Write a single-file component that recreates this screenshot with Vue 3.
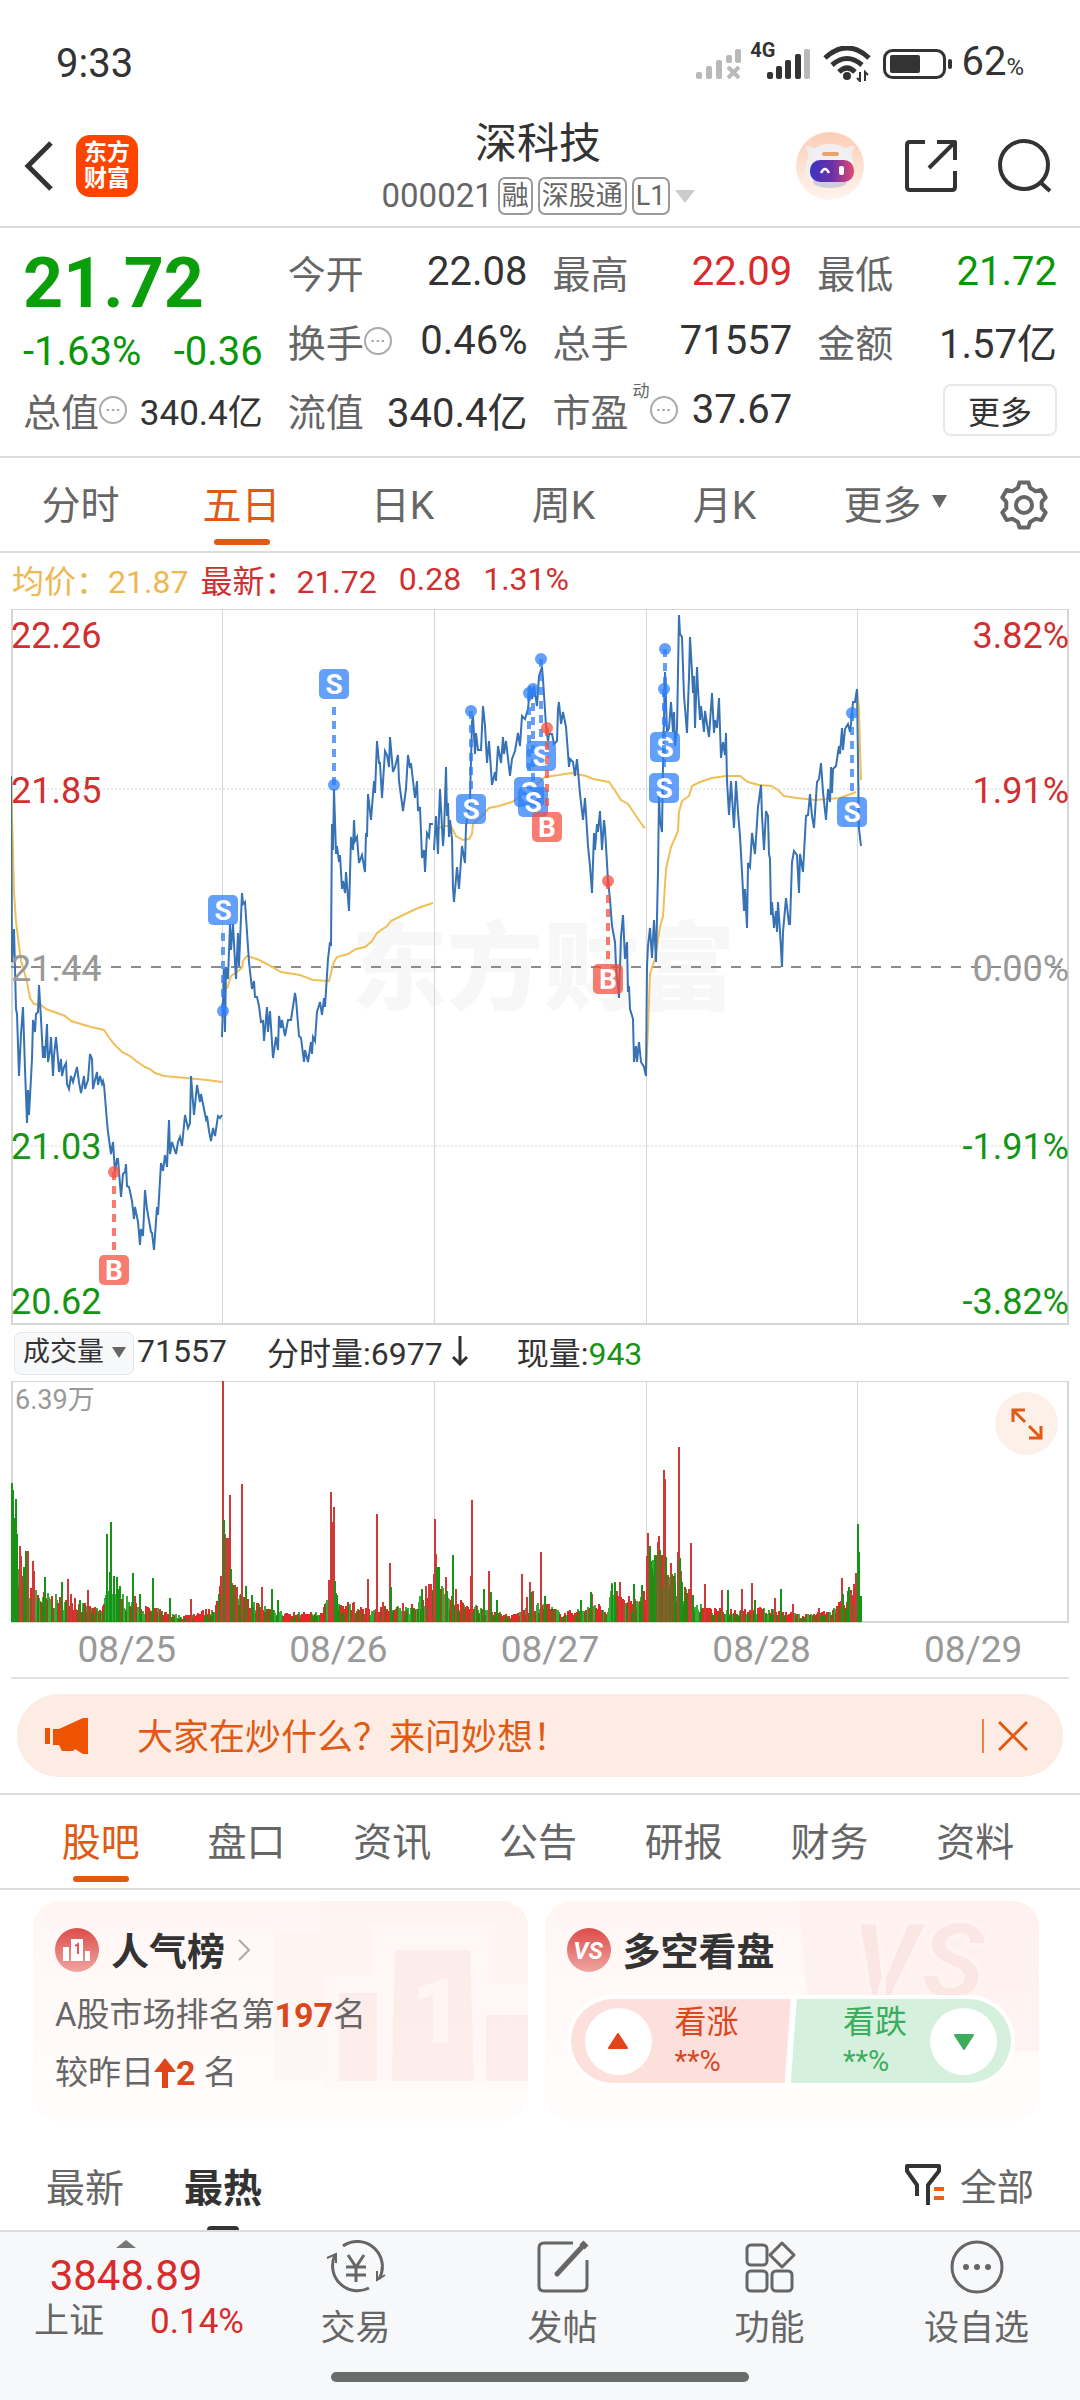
<template>
  <div class="page">
    <div class="status-bar">
      <span class="clock">9:33</span>
      <div class="status-icons">
        <svg width="46" height="30" viewBox="0 0 46 30" fill="#b9b9b9">
          <rect x="0" y="23" width="6" height="7" rx="2" />
          <rect x="10" y="17" width="6" height="13" rx="2" />
          <rect x="20" y="11" width="6" height="19" rx="2" />
          <rect x="30" y="6" width="6" height="8" rx="2" />
          <rect x="39" y="0" width="6" height="14" rx="2" />
          <path d="M32 18l11 11M43 18l-11 11" stroke="#b9b9b9" stroke-width="4" />
        </svg>
        <span class="net">4G</span>
        <svg class="signal" width="44" height="30" viewBox="0 0 44 30" fill="#333">
          <rect x="0" y="23" width="6" height="7" rx="2" />
          <rect x="9" y="17" width="6" height="13" rx="2" />
          <rect x="18" y="11" width="6" height="19" rx="2" />
          <rect x="28" y="5" width="6" height="25" rx="2" />
          <rect x="37" y="0" width="6" height="30" rx="2" fill="#b9b9b9" />
        </svg>
        <svg class="wifi" width="48" height="36" viewBox="0 0 48 36" fill="none" stroke="#333" stroke-width="5">
          <path d="M2 12Q24-8 46 12" />
          <path d="M9 19Q24 6 39 19" />
          <path d="M16 26Q24 18 32 26" />
          <circle cx="24" cy="30" r="4" fill="#333" stroke="none" />
          <path d="M37 26v9l-3-3M42 35v-9l3 3" stroke-width="2" />
        </svg>
        <svg class="battery" width="70" height="30" viewBox="0 0 70 30">
          <rect x="1.500" y="1.500" width="60" height="27" rx="8" fill="none" stroke="#333" stroke-width="3" />
          <rect x="7" y="6" width="30" height="18" rx="2" fill="#333" />
          <rect x="65" y="10" width="4" height="10" rx="2" fill="#333" />
        </svg>
        <span class="power">62<small>%</small></span>
      </div>
    </div>

    <header class="header">
      <div class="header-left">
        <button class="icon-btn" aria-label="返回">
          <svg width="30" height="50" viewBox="0 0 30 50" fill="none" stroke="#333" stroke-width="5">
            <path d="M27 2L4 25l23 23" />
          </svg>
        </button>
        <a href="#" class="logo"><span>东方</span><span>财富</span></a>
      </div>
      <div class="header-title">
        <h1>深科技</h1>
        <div class="code-row">
          <span>000021</span>
          <span v-for="tag in tags" :key="tag" class="tag">{{ tag }}</span>
          <svg width="20" height="13" viewBox="0 0 20 13"><path d="M0 0h20L10 13z" fill="#ccc" /></svg>
        </div>
      </div>
      <div class="header-right">
        <button class="icon-btn" aria-label="助手">
          <svg width="68" height="68" viewBox="0 0 68 68">
            <defs>
              <linearGradient id="botBg" x1="0" y1="0" x2="0" y2="1">
                <stop offset="0" stop-color="#fccdb5" />
                <stop offset="1" stop-color="#fff5ef" />
              </linearGradient>
              <linearGradient id="botFace" x1="0" y1="0" x2="1" y2="0">
                <stop offset="0" stop-color="#3d35c0" />
                <stop offset="0.500" stop-color="#6b2fa8" />
                <stop offset="1" stop-color="#e04a70" />
              </linearGradient>
            </defs>
            <circle cx="34" cy="34" r="34" fill="url(#botBg)" />
            <path d="M9 14q8-1 14 6l-11 12q2-10-3-18zM59 14q-8-1-14 6l11 12q-2-10 3-18z" fill="#f1ebec" />
            <path d="M34 12c15 0 23 9 24 23 0 6 0 9-3 11-4 8-12 9-21 9s-17-1-21-9c-3-2-5-5-3-11 1-14 9-23 24-23z" fill="#f1eff2" />
            <ellipse cx="34" cy="50" rx="17" ry="6" fill="#cfcdd5" />
            <rect x="26" y="20" width="17" height="4" rx="2" fill="#e8a36b" />
            <rect x="14" y="28" width="44" height="22" rx="10" fill="url(#botFace)" />
            <path d="M25 41q4-8 8 0" stroke="#fff" stroke-width="2.500" fill="none" />
            <rect x="43" y="34" width="5" height="9" rx="2" fill="#fff" />
          </svg>
        </button>
        <button class="icon-btn" aria-label="分享">
          <svg width="54" height="54" viewBox="0 0 54 54" fill="none" stroke="#333" stroke-width="4" stroke-linejoin="round">
            <path d="M21 3H6q-3 0-3 3v42q0 3 3 3h42q3 0 3-3V32" />
            <path d="M33 3h18v18M51 3L25 29" />
          </svg>
        </button>
        <button class="icon-btn" aria-label="搜索">
          <svg width="54" height="54" viewBox="0 0 54 54" fill="none" stroke="#333" stroke-width="4">
            <circle cx="26" cy="26" r="24" />
            <path d="M42 43l10 9" />
          </svg>
        </button>
      </div>
    </header>

    <section class="quote">
      <div class="quote-col">
        <div class="price">21.72</div>
        <div class="change"><span>-1.63%</span><span>-0.36</span></div>
        <div class="cell">
          <span class="label">总值<i class="dots">···</i></span>
          <span class="value small">340.4亿</span>
        </div>
      </div>
      <div v-for="(col, index) in quoteCols" :key="index" class="quote-col">
        <div v-for="item in col" :key="item.label" class="cell">
          <span class="label">{{ item.label }}<sup v-if="item.sup">{{ item.sup }}</sup><i v-if="item.tip" class="dots">···</i></span>
          <span class="value" :class="item.color">{{ item.value }}</span>
        </div>
        <div v-if="col.length < 3" class="cell">
          <button class="more-btn">更多</button>
        </div>
      </div>
    </section>

    <nav class="period-tabs">
      <button
        v-for="tab in periods"
        :key="tab"
        class="tab"
        :class="{ active: period === tab }"
        @click="period = tab"
      >
        {{ tab }}
      </button>
      <button class="tab tab-more">
        更多
        <svg width="15" height="13" viewBox="0 0 15 13"><path d="M0 0h15L7.500 13z" fill="#666" /></svg>
      </button>
      <button class="icon-btn gear" aria-label="设置">
        <svg width="50" height="50" viewBox="0 0 50 50" fill="none" stroke="#666" stroke-width="4" stroke-linejoin="round">
          <path :d="gearPath" />
          <circle cx="25" cy="25" r="8" />
        </svg>
      </button>
    </nav>

    <div class="legend">
      <span class="avg">均价：21.87</span>
      <span>最新：21.72</span>
      <span class="legend-num">0.28</span>
      <span class="legend-num">1.31%</span>
    </div>

    <section class="charts">
      <svg class="chart" viewBox="0 0 1058 716">
        <text class="watermark" x="340" y="393">东方财富</text>
        <g class="grid">
          <path d="M1 0V715M1057 0V715M0 715H1058" stroke-width="2" />
          <path d="M0 0.500H1058" />
          <path v-for="x in dayLines" :key="x" :d="`M${x} 0V715`" />
          <path d="M0 180H1058M0 537H1058" stroke-dasharray="2 2" />
        </g>
        <path d="M0 358H1058" stroke="#8c8c8c" stroke-width="2" stroke-dasharray="10 10" />
        <polyline v-for="(line, i) in avgLines" :key="'a' + i" :points="line" class="avg-line" />
        <polyline v-for="(line, i) in priceLines" :key="'p' + i" :points="line" class="price-line" />
        <g v-for="(m, i) in marks" :key="'m' + i" class="mark" :class="m.type">
          <path :d="`M${m.x} ${m.dot}V${m.y + (m.y > m.dot ? -17 : 17)}`" stroke-width="4" stroke-dasharray="8 6" />
          <circle :cx="m.x" :cy="m.dot" r="6" />
          <rect :x="m.x - 15" :y="m.y - 15" width="30" height="30" rx="5" />
          <text :x="m.x" :y="m.y + 10">{{ m.type }}</text>
        </g>
        <g v-for="a in axis" :key="a.price" class="axis" :class="a.color">
          <text x="0" :y="a.y">{{ a.price }}</text>
          <text x="1058" :y="a.y" text-anchor="end">{{ a.rate }}</text>
        </g>
      </svg>

      <div class="volume-info">
        <div class="select-wrap">
          <select aria-label="指标">
            <option>成交量</option>
          </select>
          <svg width="14" height="11" viewBox="0 0 14 11"><path d="M0 0h14L7 11z" fill="#666" /></svg>
        </div>
        <span class="total">71557</span>
        <span class="minute">分时量:6977<svg width="18" height="30" viewBox="0 0 18 30" fill="none" stroke="#333" stroke-width="3"><path d="M9 0v28M2 21l7 7 7-7" /></svg></span>
        <span>现量:<b>943</b></span>
      </div>

      <div class="volume">
        <svg class="chart" viewBox="0 0 1058 242">
          <g class="grid">
            <path d="M1 0V241M1057 0V241M0 241H1058" stroke-width="2" />
            <path d="M0 0.500H1058" />
            <path v-for="x in dayLines" :key="x" :d="`M${x} 0V241`" />
          </g>
          <path :d="volume.red" stroke="#df2a28" stroke-width="2" />
          <path :d="volume.green" stroke="#0a960a" stroke-width="2" opacity="0.800" />
          <path :d="volume.spikes" stroke="#cf3a38" stroke-width="2" />
          <path :d="volume.drops" stroke="#159415" stroke-width="2" />
          <text x="4" y="28" class="volume-max">6.39万</text>
        </svg>
        <button class="expand" aria-label="全屏">
          <svg width="32" height="32" viewBox="0 0 32 32" fill="none" stroke="#e05a14" stroke-width="3">
            <path d="M14 2H2v12M2 2l12 12M18 30h12V18M30 30L18 18" />
          </svg>
        </button>
      </div>

      <div class="dates">
        <span v-for="d in dates" :key="d">{{ d }}</span>
      </div>
    </section>

    <div class="banner">
      <svg width="44" height="38" viewBox="0 0 44 38" fill="#ee5203">
        <rect x="0" y="11" width="5" height="16" />
        <path d="M8 12h6L38 1h5v36h-5l-8-5-2 2H17l-3-6H8z" />
      </svg>
      <a href="#">大家在炒什么？来问妙想！</a>
      <button class="icon-btn banner-close" aria-label="关闭">
        <svg width="30" height="30" viewBox="0 0 30 30" stroke="#e05a14" stroke-width="3"><path d="M1 1l28 28M29 1L1 29" /></svg>
      </button>
    </div>

    <nav class="info-tabs">
      <button
        v-for="tab in infoTabs"
        :key="tab"
        class="tab"
        :class="{ active: infoTab === tab }"
        @click="infoTab = tab"
      >
        {{ tab }}
      </button>
    </nav>

    <section class="cards">
      <div class="card">
        <svg class="card-bg" width="254" height="220" viewBox="0 0 254 220">
          <path d="M0 180V29h47V0h207v180z" fill="#fdeeec" opacity="0.350" />
          <path d="M50 190V75h47V22h124v60h33v108z" fill="#fff8f6" opacity="0.600" />
          <path d="M65 180V92h38v88zM118 180l3-131h75l4 131zM212 180v-66h42v66z" fill="#fbe3e0" opacity="0.500" />
          <text x="137" y="142" class="bg-one">1</text>
        </svg>
        <div class="card-title">
          <svg width="44" height="44" viewBox="0 0 44 44">
            <circle cx="22" cy="22" r="22" fill="url(#badge)" />
            <path d="M8 33V19h6v14zM16 33V11h12v22zM30 33V23h5v10z" fill="#fff" />
            <path d="M20 18l3-2v10" stroke="#df5b57" stroke-width="2" fill="none" />
          </svg>
          <h2>人气榜</h2>
          <svg class="arrow" width="14" height="22" viewBox="0 0 14 22" fill="none" stroke="#aaa" stroke-width="2"><path d="M2 1l10 10L2 21" /></svg>
        </div>
        <p class="rank">A股市场排名第<b>197</b>名</p>
        <p class="rank">较昨日<svg width="22" height="30" viewBox="0 0 22 30"><path d="M11 0l11 14h-8v16H8V14H0z" fill="#e2441a" /></svg><b>2</b> 名</p>
      </div>

      <div class="card">
        <svg class="card-bg" width="240" height="220" viewBox="0 0 240 220">
          <path d="M0 0h240v150H12z" fill="#fdeeec" opacity="0.600" />
          <text x="52" y="98" class="bg-vs">VS</text>
        </svg>
        <div class="card-title">
          <svg width="44" height="44" viewBox="0 0 44 44">
            <defs>
              <linearGradient id="badge" x1="0" y1="0" x2="0" y2="1">
                <stop offset="0" stop-color="#dc4c4a" />
                <stop offset="1" stop-color="#f0a5a0" />
              </linearGradient>
            </defs>
            <circle cx="22" cy="22" r="22" fill="url(#badge)" />
            <text x="21" y="31" class="vs">VS</text>
          </svg>
          <h2>多空看盘</h2>
        </div>
        <div class="vote">
          <button class="vote-up">
            <span class="vote-dot"><svg width="22" height="17" viewBox="0 0 22 17"><path d="M11 1l9 14H2z" fill="#e2441a" stroke="#e2441a" stroke-width="2" stroke-linejoin="round" /></svg></span>
            <span class="vote-text">看涨<small>**%</small></span>
          </button>
          <button class="vote-down">
            <span class="vote-text">看跌<small>**%</small></span>
            <span class="vote-dot"><svg width="22" height="17" viewBox="0 0 22 17"><path d="M11 16L2 2h18z" fill="#3cad5c" stroke="#3cad5c" stroke-width="2" stroke-linejoin="round" /></svg></span>
          </button>
        </div>
      </div>
    </section>

    <div class="sort-row">
      <button class="sort">最新</button>
      <button class="sort current">最热</button>
      <button class="filter">
        <svg width="42" height="44" viewBox="0 0 42 44" fill="none" stroke="#333" stroke-width="4" stroke-linejoin="round">
          <path d="M12 33V22L2 8V3h32v5L23 22v20" />
          <path d="M29 26h10M29 35h10" stroke="#ee5f1a" />
        </svg>
        全部
      </button>
    </div>

    <footer class="bottom">
      <div class="bottom-nav">
        <a href="#" class="index">
          <svg width="20" height="8" viewBox="0 0 20 8"><path d="M0 8L10 0l10 8z" fill="#777" /></svg>
          <span class="index-value">3848.89</span>
          <span class="index-row"><span>上证</span><em>0.14%</em></span>
        </a>
        <a href="#" class="nav-item">
          <svg width="60" height="54" viewBox="0 0 60 54" fill="none" stroke="#666" stroke-width="3">
            <path d="M17 6a25 25 0 0 1 36 33M43 48A25 25 0 0 1 9 15" />
            <path d="M1 18l9-4v9M59 35l-8 5V31" stroke-width="2" />
            <path d="M22 15l8 12 8-12M20 27h20M20 35h20M30 27v15" />
          </svg>
          交易
        </a>
        <a href="#" class="nav-item">
          <svg width="54" height="54" viewBox="0 0 54 54" fill="none" stroke="#666" stroke-width="3">
            <path d="M37 3H8Q3 3 3 8v38q0 5 5 5h38q5 0 5-5V20" />
            <path d="M21 34L46 7" stroke-width="5" stroke-linecap="round" />
            <path d="M46 7l4-4" stroke-width="7" />
          </svg>
          发帖
        </a>
        <a href="#" class="nav-item">
          <svg width="54" height="54" viewBox="0 0 54 54" fill="none" stroke="#666" stroke-width="3" stroke-linejoin="round">
            <rect x="4" y="5" width="20" height="20" rx="4" />
            <rect x="4" y="31" width="20" height="20" rx="4" />
            <rect x="29" y="31" width="20" height="20" rx="4" />
            <path d="M39 3l12 12-12 12-12-12z" />
          </svg>
          功能
        </a>
        <a href="#" class="nav-item">
          <svg width="54" height="54" viewBox="0 0 54 54" fill="none" stroke="#666" stroke-width="3">
            <circle cx="27" cy="27" r="25" />
            <g fill="#666" stroke="none">
              <circle cx="16" cy="27" r="3" />
              <circle cx="27" cy="27" r="3" />
              <circle cx="38" cy="27" r="3" />
            </g>
          </svg>
          设自选
        </a>
      </div>
      <div class="home-bar"></div>
    </footer>
  </div>
</template>

<script setup>
import { ref } from 'vue'

const tags = ['融', '深股通', 'L1']

const quoteCols = [
  [
    { label: '今开', value: '22.08' },
    { label: '换手', value: '0.46%', tip: true },
    { label: '流值', value: '340.4亿' }
  ],
  [
    { label: '最高', value: '22.09', color: 'red' },
    { label: '总手', value: '71557' },
    { label: '市盈', value: '37.67', sup: '动', tip: true }
  ],
  [
    { label: '最低', value: '21.72', color: 'green' },
    { label: '金额', value: '1.57亿' }
  ]
]

const periods = ['分时', '五日', '日K', '周K', '月K']
const period = ref('五日')

const infoTabs = ['股吧', '盘口', '资讯', '公告', '研报', '财务', '资料']
const infoTab = ref('股吧')

const dates = ['08/25', '08/26', '08/27', '08/28', '08/29']
const dayLines = [211.5, 423.5, 635.5, 846.5]

const axis = [
  { price: '22.26', rate: '3.82%', y: 39, color: 'red' },
  { price: '21.85', rate: '1.91%', y: 194, color: 'red' },
  { price: '21.44', rate: '0.00%', y: 372, color: 'gray' },
  { price: '21.03', rate: '-1.91%', y: 550, color: 'green' },
  { price: '20.62', rate: '-3.82%', y: 705, color: 'green' }
]

// 每天一条分时线
const priceLines = [
  '0,167 1,353 3,320 5,400 6,405 8,467 10,425 12,398 14,460 16,514 17,481 18,506 21,450 22,411 24,423 25,405 27,403 28,376 30,410 32,449 33,437 34,449 36,415 37,453 39,442 40,428 42,467 43,447 45,428 47,450 48,463 50,450 51,467 53,458 55,454 56,475 58,480 60,467 62,473 66,458 68,473 70,484 73,467 74,480 77,471 79,445 81,450 82,480 84,471 86,463 87,476 89,467 91,475 92,472 93,476 94,488 96,513 97,523 100,545 102,533 104,563 106,550 107,550 110,588 112,565 114,563 115,555 116,577 118,578 121,592 123,610 124,598 127,613 129,636 130,620 132,627 134,581 136,600 140,623 141,624 143,641 146,598 147,606 150,554 152,562 154,546 156,558 158,511 159,545 161,533 165,545 167,533 169,528 171,537 174,506 177,519 179,514 180,467 183,506 186,476 189,493 190,485 195,510 196,507 198,522 200,532 202,519 204,527 207,507 209,509 211,506',
  '211,428 213,360 214,423 215,358 217,370 219,315 220,341 222,315 224,353 225,370 227,324 228,357 231,284 232,295 234,293 236,323 238,353 241,380 243,372 244,388 246,388 248,397 250,413 252,412 253,432 256,398 257,423 259,402 262,449 265,428 267,441 268,407 270,419 271,411 274,427 277,411 280,411 284,384 285,390 288,427 290,429 293,453 294,441 297,453 300,433 301,445 302,428 304,432 306,403 309,393 311,406 313,389 314,398 317,350 319,333 320,337 321,215 322,241 323,180 325,245 326,237 328,253 329,246 331,280 332,272 334,284 335,263 338,302 340,228 342,241 343,211 344,232 346,228 348,254 351,246 354,263 355,224 356,228 357,185 360,211 363,172 364,184 366,132 368,154 369,154 371,189 374,142 376,146 378,158 379,128 382,163 384,158 387,146 388,172 392,202 395,180 397,146 399,159 400,154 402,172 404,189 406,172 407,202 409,198 411,249 413,241 414,263 416,224 418,228 419,215 422,215',
  '423,241 425,207 427,245 428,207 429,180 432,237 433,223 435,158 436,207 437,194 438,228 439,211 441,230 442,280 443,293 446,258 448,280 451,237 454,254 455,217 459,190 461,113 462,107 464,145 465,124 467,141 470,141 472,97 474,117 476,154 478,132 481,176 484,163 485,172 487,137 490,154 492,128 493,145 495,132 499,167 501,150 504,142 507,124 509,137 511,107 514,110 517,100 519,77 521,90 523,77 526,97 528,67 531,58 532,70 535,117 537,132 538,125 541,125 543,135 546,132 547,100 548,93 550,115 552,103 555,118 558,158 559,150 562,153 564,167 566,150 569,185 572,211 574,189 577,237 579,257 581,284 583,224 584,241 586,215 587,223 589,202 591,241 593,211 594,220 597,272 599,290 601,317 604,333 605,357 608,389 610,328 612,306 614,350 616,333 617,383 618,377 619,400 622,410 623,453 625,437 626,453 628,433 630,453 633,458 635,467',
  '635,467 636,357 637,337 639,319 641,349 643,311 645,353 647,263 648,187 649,211 651,223 652,157 654,63 656,123 658,119 660,93 662,123 663,103 664,137 666,120 668,6 669,25 671,28 673,87 676,124 678,68 679,28 681,63 682,84 683,67 684,119 686,58 687,80 689,111 690,97 693,123 694,102 698,128 701,84 703,124 704,111 706,119 708,89 709,120 710,149 712,133 714,146 715,124 716,172 718,206 720,172 723,219 725,172 727,203 729,227 731,263 733,302 734,280 736,319 737,254 739,258 741,224 744,245 747,198 750,176 751,207 753,241 755,202 757,207 758,245 759,250 760,306 761,293 763,319 765,302 766,323 767,293 769,323 771,358 772,323 775,289 778,315 779,315 781,253 783,242 786,246 788,284 789,245 792,263 795,207 797,206 799,185 801,207 803,219 806,173 808,170 810,154 812,183 815,211 817,180 819,193 820,158 821,184 822,160 825,157 828,137 829,145 831,119 832,141 834,120 837,115 839,123 840,115 842,93 844,93 846,80',
  '846,80 848,220 850,237'
]

const avgLines = [
  '0,167 3,283 5,313 10,352 13,362 16,373 19,389 23,395 30,396 35,400 46,404 54,407 60,412 80,418 93,421 97,427 103,435 111,443 119,447 125,452 134,458 139,460 144,464 153,467 175,469 196,471 211,473',
  '216,380 220,367 227,362 231,359 232,352 236,347 246,350 256,355 270,363 289,366 302,371 318,372 321,360 323,353 326,348 337,345 345,340 354,338 361,332 366,324 376,317 380,312 390,307 407,299 422,294',
  '424,220 433,217 440,217 445,227 452,231 458,230 461,225 462,215 471,207 478,199 488,197 501,193 520,180 534,168 548,166 560,164 575,167 582,170 598,173 603,180 610,191 617,195 625,207 632,217 634,219',
  '635,465 637,420 639,365 644,350 649,318 652,307 655,260 660,238 667,222 668,203 671,192 678,187 681,177 689,173 701,169 715,167 729,167 737,173 748,176 760,177 767,181 773,187 786,189 804,191 829,189 845,183',
  '846,80 848,100 849,140 850,171'
]

const marks = [
  { type: 'B', x: 103, y: 661, dot: 563 },
  { type: 'S', x: 212, y: 301, dot: 402 },
  { type: 'S', x: 323, y: 75, dot: 176 },
  { type: 'S', x: 460, y: 200, dot: 102 },
  { type: 'S', x: 518, y: 183, dot: 84 },
  { type: 'S', x: 522, y: 193, dot: 80 },
  { type: 'S', x: 530, y: 147, dot: 50 },
  { type: 'B', x: 536, y: 218, dot: 119 },
  { type: 'B', x: 597, y: 370, dot: 272 },
  { type: 'S', x: 654, y: 138, dot: 40 },
  { type: 'S', x: 653, y: 179, dot: 80 },
  { type: 'S', x: 841, y: 203, dot: 104 }
]

// 成交量底部轮廓: [x, 高度]
const envelope = [
  [0, 75], [10, 45], [20, 32], [60, 22], [90, 12], [100, 45], [110, 28], [125, 18],
  [150, 12], [170, 6], [200, 13], [208, 24], [214, 80], [220, 40], [235, 22], [250, 18],
  [275, 9], [312, 10], [320, 42], [330, 19], [360, 14], [400, 16], [420, 34], [428, 40],
  [445, 22], [480, 13], [500, 6], [515, 14], [535, 20], [550, 9], [590, 18], [597, 10],
  [601, 38], [608, 32], [615, 18], [630, 26], [640, 60], [650, 64], [665, 45], [672, 36],
  [685, 18], [700, 13], [750, 14], [790, 7], [820, 12], [835, 26], [846, 38]
]

const upSpikes = [
  [9, 76], [10, 66], [17, 71], [22, 61], [23, 51], [57, 43], [60, 28], [64, 24], [77, 32], [124, 26],
  [180, 23], [211, 45], [212, 241], [214, 88], [216, 84], [217, 84], [219, 127], [226, 35], [231, 138],
  [251, 35], [318, 42], [320, 130], [321, 100], [323, 115], [343, 20], [357, 43], [366, 108], [372, 20],
  [379, 59], [392, 19], [415, 36], [418, 38], [420, 38], [423, 48], [424, 103], [425, 68], [435, 45],
  [445, 33], [460, 46], [461, 122], [478, 51], [511, 48], [516, 25], [519, 40], [522, 31], [530, 70],
  [581, 28], [609, 40], [613, 22], [618, 26], [636, 66], [637, 89], [647, 80], [648, 86], [653, 152],
  [654, 143], [657, 47], [660, 59], [667, 70], [668, 175], [670, 51], [678, 33], [680, 79], [694, 38],
  [711, 32], [731, 33], [741, 39], [764, 24], [782, 18], [808, 14], [831, 44], [840, 30], [843, 37], [845, 49]
]

const downSpikes = [
  [1, 139], [2, 132], [4, 104], [5, 123], [6, 88], [13, 55], [15, 71], [34, 45], [51, 40], [69, 22],
  [96, 88], [99, 50], [100, 100], [103, 46], [106, 45], [109, 36], [122, 49], [129, 28], [142, 44],
  [159, 24], [208, 28], [213, 102], [220, 53], [223, 37], [235, 36], [241, 27], [261, 33], [267, 22],
  [324, 41], [326, 27], [380, 35], [411, 33], [426, 55], [428, 55], [436, 31], [442, 67], [473, 33],
  [480, 30], [486, 22], [520, 30], [534, 26], [570, 22], [580, 30], [601, 38], [604, 40], [623, 38],
  [631, 37], [639, 76], [640, 61], [644, 67], [645, 67], [649, 72], [655, 65], [661, 48], [664, 40],
  [669, 64], [671, 40], [682, 27], [717, 32], [744, 22], [770, 33], [832, 28], [837, 31], [838, 35],
  [847, 98], [848, 70], [850, 26]
]

const baseHeight = (x) => {
  const i = envelope.findIndex((p) => p[0] > x)
  if (i < 1) return envelope[envelope.length - 1][1]
  const [x0, h0] = envelope[i - 1]
  const [x1, h1] = envelope[i]
  return h0 + ((h1 - h0) * (x - x0)) / (x1 - x0)
}

const bars = (list) => list.map(([x, h]) => `M${x} 241v${-h}`).join('')

const buildVolume = () => {
  let seed = 7
  const rand = () => {
    seed = (seed * 16807) % 2147483647
    return seed / 2147483647
  }
  const red = []
  const green = []
  for (let x = 1; x < 846; x += 1) {
    const bar = [x, Math.round(baseHeight(x) * (0.45 + 0.65 * rand()))]
    const falling = (x > 94 && x < 108) || (x > 596 && x < 606)
    if (falling || rand() < 0.42) green.push(bar)
    else red.push(bar)
  }
  return { red: bars(red), green: bars(green), spikes: bars(upSpikes), drops: bars(downSpikes) }
}
const volume = buildVolume()

// 六齿齿轮
const gearPath = (() => {
  const pts = []
  for (let i = 0; i < 6; i++) {
    const mid = -90 + i * 60
    for (const [offset, r] of [[-20, 18], [-11, 23], [11, 23], [20, 18]]) {
      const a = ((mid + offset) * Math.PI) / 180
      pts.push(`${(25 + r * Math.cos(a)).toFixed(1)} ${(25 + r * Math.sin(a)).toFixed(1)}`)
    }
  }
  return `M${pts.join('L')}Z`
})()
</script>

<style>
body {
  margin: 0;
  background: #fff;
}
</style>

<style scoped>
.page {
  display: flex;
  flex-direction: column;
  min-height: 100vh;
  font-family: Roboto, "Noto Sans CJK SC", sans-serif;
  color: #333;
  background: #fff;
}

.page * {
  box-sizing: border-box;
}

button,
select {
  font-family: inherit;
  color: inherit;
  background: none;
  border: none;
  padding: 0;
  cursor: pointer;
}

a {
  color: inherit;
  text-decoration: none;
}

h1,
h2,
p {
  margin: 0;
}

svg {
  display: block;
  flex-shrink: 0;
}

.red {
  color: #d92b2b;
}

.green {
  color: #0a960a;
}

.icon-btn {
  display: flex;
}

/* 状态栏 */
.status-bar {
  display: flex;
  justify-content: space-between;
  align-items: center;
  height: 100px;
  padding: 28px 56px 0;
}

.clock,
.power {
  font-size: 40px;
  line-height: 40px;
}

.status-icons {
  display: flex;
  align-items: center;
}

.net {
  align-self: flex-start;
  margin-left: 8px;
  font-size: 20px;
  font-weight: 700;
  line-height: 16px;
}

.signal {
  margin-left: -8px;
}

.wifi {
  margin-left: 12px;
}

.battery {
  margin: 0 8px 0 12px;
}

.power small {
  font-size: 24px;
}

/* 顶部标题 */
.header {
  display: grid;
  grid-template-columns: 1fr auto 1fr;
  align-items: center;
  height: 128px;
  padding: 6px 28px 0 24px;
  border-bottom: 2px solid #dcdcdc;
}

.header-left {
  display: flex;
  align-items: center;
  gap: 22px;
}

.logo {
  display: flex;
  flex-direction: column;
  justify-content: center;
  align-items: center;
  width: 62px;
  height: 62px;
  border-radius: 14px;
  background: #ff4400;
  color: #fff;
  font-size: 23px;
  font-weight: 700;
  line-height: 26px;
}

.header-title {
  display: flex;
  flex-direction: column;
  align-items: center;
  padding-top: 2px;
}

.header-title h1 {
  font-size: 42px;
  font-weight: 400;
  line-height: 58px;
}

.code-row {
  display: flex;
  align-items: center;
  gap: 5px;
  font-size: 33px;
  line-height: 46px;
  color: #666;
}

.tag {
  padding: 0 2px;
  border: 2px solid #999;
  border-radius: 7px;
  font-size: 27px;
  line-height: 34px;
}

.header-right {
  display: flex;
  align-items: center;
  justify-content: flex-end;
  gap: 40px;
}

/* 行情数据 */
.quote {
  display: grid;
  grid-template-columns: repeat(4, 1fr);
  gap: 25px;
  padding: 9px 23px 12px;
  border-bottom: 2px solid #dcdcdc;
}

.quote-col {
  min-width: 0;
}

.price {
  font-size: 70px;
  font-weight: 700;
  line-height: 92px;
  color: #0a9f0a;
}

.change {
  display: flex;
  justify-content: space-between;
  font-size: 40px;
  line-height: 46px;
  color: #0a960a;
}

.cell {
  display: flex;
  justify-content: space-between;
  align-items: center;
  height: 69px;
  white-space: nowrap;
}

.label {
  display: flex;
  align-items: center;
  font-size: 38px;
  color: #666;
}

.label sup {
  align-self: flex-start;
  margin-left: 4px;
  font-size: 17px;
  line-height: 18px;
}

.dots {
  display: flex;
  justify-content: center;
  align-items: center;
  width: 28px;
  height: 28px;
  border: 2px solid #aaa;
  border-radius: 50%;
  font-size: 20px;
  font-style: normal;
  color: #999;
}

.value {
  font-size: 40px;
}

.value.small {
  font-size: 35px;
}

.more-btn {
  width: 114px;
  height: 52px;
  margin-left: auto;
  border: 2px solid #e8e8e8;
  border-radius: 8px;
  font-size: 32px;
}

/* 标签栏 */
.period-tabs,
.info-tabs {
  display: flex;
  height: 95px;
  border-bottom: 2px solid #dcdcdc;
}

.tab {
  position: relative;
  flex: 161 1 0;
  padding-bottom: 6px;
  font-size: 39px;
  color: #666;
}

.tab.active {
  color: #e05a14;
}

.tab.active::after {
  content: "";
  position: absolute;
  left: 50%;
  bottom: 6px;
  width: 56px;
  height: 6px;
  margin-left: -28px;
  border-radius: 3px;
  background: #e05a14;
}

.tab-more {
  display: flex;
  flex: 180 1 0;
  justify-content: center;
  align-items: center;
  gap: 10px;
}

.gear {
  align-items: center;
  margin: 0 31px 0 14px;
}

.legend {
  display: flex;
  align-items: center;
  height: 56px;
  padding: 0 0 4px 12px;
  font-size: 32px;
  color: #d0302f;
}

.avg {
  margin-right: 12px;
  color: #efb74f;
}

.legend-num {
  margin-left: 22px;
}

/* 图表 */
.charts {
  padding: 0 11px;
}

.chart {
  width: 100%;
  height: auto;
}

.grid {
  fill: none;
  stroke: #d6d6d6;
}

.watermark {
  font-size: 96px;
  font-weight: 900;
  fill: #f7f7f7;
}

.avg-line {
  fill: none;
  stroke: #f0bf58;
  stroke-width: 2;
}

.price-line {
  fill: none;
  stroke: #3672b4;
  stroke-width: 2;
}

.mark {
  fill: #2f80f7;
  stroke: none;
}

.mark path {
  stroke: #2f80f7;
  opacity: 0.75;
}

.mark rect,
.mark circle {
  opacity: 0.75;
}

.mark.B {
  fill: #f5503f;
}

.mark.B path {
  stroke: #f5503f;
}

.mark text {
  font-size: 28px;
  font-weight: 700;
  text-anchor: middle;
  fill: #fff;
}

.axis {
  font-size: 36px;
  fill: #999;
}

.axis.red {
  fill: #d0302f;
}

.axis.green {
  fill: #159415;
}

.volume-info {
  display: flex;
  align-items: center;
  height: 56px;
  padding-left: 3px;
  font-size: 32px;
}

.volume-info > span {
  padding-bottom: 4px;
}

.volume-info b {
  font-weight: 400;
  color: #159415;
}

.select-wrap {
  position: relative;
}

.select-wrap select {
  width: 120px;
  height: 43px;
  padding: 0 0 2px 8px;
  appearance: none;
  border: 1px solid #e4e6ea;
  border-radius: 7px;
  background: #f7f8fa;
  font-size: 27px;
}

.select-wrap svg {
  position: absolute;
  right: 8px;
  top: 16px;
  pointer-events: none;
}

.total {
  margin: 0 40px 0 3px;
}

.minute {
  display: flex;
  align-items: center;
  gap: 8px;
  margin-right: 48px;
}

.volume {
  position: relative;
}

.volume-max {
  font-size: 27px;
  fill: #999;
}

.expand {
  position: absolute;
  right: 11px;
  top: 11px;
  display: flex;
  justify-content: center;
  align-items: center;
  width: 63px;
  height: 63px;
  border-radius: 50%;
  background: #fdf0e9;
}

.dates {
  display: grid;
  grid-template-columns: repeat(5, 1fr);
  border-bottom: 2px solid #e2e2e2;
  font-size: 37px;
  line-height: 54px;
  text-align: center;
  color: #999;
}

.dates span {
  padding-left: 20px;
}

/* 横幅 */
.banner {
  display: flex;
  align-items: center;
  height: 83px;
  margin: 15px 17px 16px;
  padding: 0 35px 0 28px;
  border-radius: 42px;
  background: #fcece3;
  font-size: 36px;
  color: #e05a14;
}

.banner a {
  flex: 1;
  margin-left: 48px;
  padding-bottom: 4px;
}

.banner-close {
  padding: 2px 0 2px 14px;
  border-left: 2px solid #e9824d;
}

.info-tabs {
  height: 97px;
  padding: 0 32px 0 28px;
  border-top: 2px solid #dcdcdc;
}

/* 卡片 */
.cards {
  display: grid;
  grid-template-columns: 1fr 1fr;
  gap: 17px;
  padding: 11px 41px 0 33px;
}

.card {
  position: relative;
  height: 220px;
  padding: 21px 22px;
  overflow: hidden;
  border-radius: 26px;
  background: linear-gradient(#fff6f4, #fffdfc);
}

.card-bg {
  position: absolute;
  right: 0;
  top: 0;
}

.bg-one {
  font-size: 90px;
  font-weight: 900;
  fill: #fff6f4;
}

.bg-vs {
  font-size: 108px;
  font-style: italic;
  font-weight: 900;
  fill: #fce6e3;
  stroke: #fff4f2;
  stroke-width: 4;
}

.card-title {
  position: relative;
  display: flex;
  align-items: center;
  gap: 12px;
  height: 56px;
}

.card-title h2 {
  padding-bottom: 4px;
  font-size: 38px;
  font-weight: 700;
}

.vs {
  font-size: 24px;
  font-style: italic;
  font-weight: 700;
  text-anchor: middle;
  fill: #fff;
}

.rank {
  position: relative;
  display: flex;
  align-items: center;
  font-size: 33px;
  line-height: 58px;
  color: #666;
  white-space: pre;
}

.card-title + .rank {
  margin-top: 8px;
}

.rank b {
  font-size: 34px;
  color: #d9481c;
}

.vote {
  position: relative;
  display: flex;
  height: 92px;
  margin: 17px 2px 0 0;
  border: 4px solid #fff;
  border-radius: 46px;
  background: #fff;
  overflow: hidden;
}

.vote button {
  display: flex;
  flex: 1;
  align-items: center;
  gap: 23px;
  padding: 0 14px;
}

.vote .vote-up {
  margin-right: -4px;
  background: #fddfdc;
  color: #d9481c;
  clip-path: polygon(0 0, 100% 0, calc(100% - 6px) 100%, 0 100%);
}

.vote .vote-down {
  justify-content: flex-end;
  margin-left: 4px;
  background: #d6f0de;
  color: #3cad5c;
  clip-path: polygon(6px 0, 100% 0, 100% 100%, 0 100%);
}

.vote-dot {
  display: flex;
  justify-content: center;
  align-items: center;
  width: 67px;
  height: 67px;
  border-radius: 50%;
  background: #fff;
}

.vote-text {
  font-size: 32px;
  line-height: 40px;
  text-align: left;
}

.vote-text small {
  display: block;
  font-size: 29px;
  line-height: 38px;
}

/* 排序 */
.sort-row {
  display: flex;
  align-items: center;
  gap: 60px;
  height: 109px;
  padding: 18px 46px 0;
  color: #666;
}

.sort {
  font-size: 39px;
}

.sort.current {
  position: relative;
  height: 100%;
  font-weight: 700;
  color: #333;
}

.sort.current::after {
  content: "";
  position: absolute;
  left: 50%;
  bottom: 0;
  width: 32px;
  height: 4px;
  margin-left: -16px;
  border-radius: 4px 4px 0 0;
  background: #333;
}

.filter {
  display: flex;
  align-items: center;
  gap: 13px;
  margin-left: auto;
  font-size: 37px;
}

/* 底部 */
.bottom {
  flex: 1;
  border-top: 2px solid #d9dbde;
  background: #f7f8fa;
  color: #666;
}

.bottom-nav {
  display: grid;
  grid-template-columns: 252fr 207fr 207fr 207fr 207fr;
  height: 140px;
  padding-top: 8px;
}

.index {
  display: flex;
  flex-direction: column;
  align-items: center;
}

.index-value {
  font-size: 42px;
  line-height: 56px;
  color: #d92b2b;
}

.index-row {
  display: flex;
  align-items: center;
  gap: 46px;
  margin-left: 26px;
  font-size: 35px;
  line-height: 36px;
}

.index-row em {
  font-style: normal;
  color: #d92b2b;
}

.nav-item {
  display: flex;
  flex-direction: column;
  align-items: center;
  gap: 10px;
  font-size: 35px;
  line-height: 50px;
}

.home-bar {
  width: 418px;
  max-width: 60%;
  height: 10px;
  margin: 0 auto;
  border-radius: 5px;
  background: #6a6b6b;
}
</style>
